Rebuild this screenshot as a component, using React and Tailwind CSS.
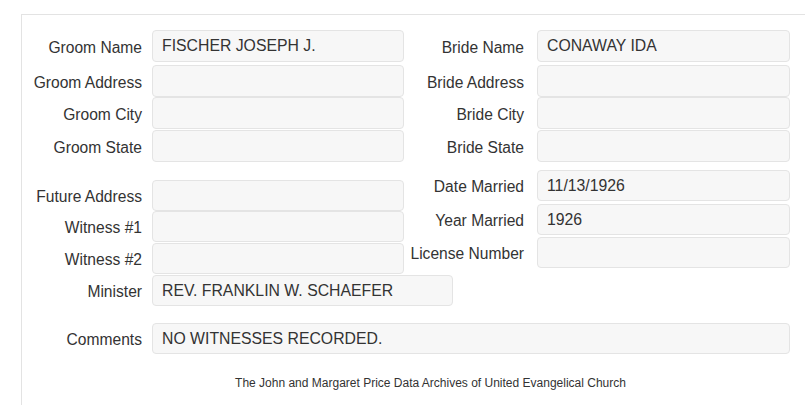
const Field = ({ label, value, labelW, gap, inputW, h, mt }) => (
  <div className={`flex items-center ${mt}`}>
    <label
      className={`${labelW} ${gap} shrink-0 text-right text-[15.6px] leading-[18px] pt-[3px] text-[#333] whitespace-nowrap`}
    >
      {label}
    </label>
    <div
      className={`${inputW} ${h} shrink-0 flex items-center px-[9px] bg-[#f7f7f7] border border-[#e4e4e4] rounded-[4px] text-[15.8px] text-[#333] whitespace-nowrap overflow-hidden`}
    >
      {value}
    </div>
  </div>
);

export default function App() {
  return (
    <div
      className="w-[805px] h-[405px] overflow-hidden bg-white pt-[14px] pl-[21px]"
      style={{ fontFamily: '"Liberation Sans", Arial, sans-serif' }}
    >
      <div className="border-t border-l border-[#e3e3e3] min-h-[400px]">
        <div className="flex">
          {/* Left column */}
          <div className="flex flex-col w-[382px]">
            <Field label="Groom Name" value="FISCHER JOSEPH J." labelW="w-[120px]" gap="mr-[10px]" inputW="w-[252px]" h="h-[32px]" mt="mt-[15px]" />
            <Field label="Groom Address" value="" labelW="w-[120px]" gap="mr-[10px]" inputW="w-[252px]" h="h-[32px]" mt="mt-[3px]" />
            <Field label="Groom City" value="" labelW="w-[120px]" gap="mr-[10px]" inputW="w-[252px]" h="h-[32px]" mt="mt-0" />
            <Field label="Groom State" value="" labelW="w-[120px]" gap="mr-[10px]" inputW="w-[252px]" h="h-[32px]" mt="mt-[1px]" />
            <Field label="Future Address" value="" labelW="w-[120px]" gap="mr-[10px]" inputW="w-[252px]" h="h-[31px]" mt="mt-[18px]" />
            <Field label="Witness #1" value="" labelW="w-[120px]" gap="mr-[10px]" inputW="w-[252px]" h="h-[31px]" mt="mt-0" />
            <Field label="Witness #2" value="" labelW="w-[120px]" gap="mr-[10px]" inputW="w-[252px]" h="h-[31px]" mt="mt-[1px]" />
            <Field label="Minister" value="REV. FRANKLIN W. SCHAEFER" labelW="w-[120px]" gap="mr-[10px]" inputW="w-[301px]" h="h-[31px]" mt="mt-[1px]" />
          </div>

          {/* Right column */}
          <div className="flex flex-col w-[386px]">
            <Field label="Bride Name" value="CONAWAY IDA" labelW="w-[120px]" gap="mr-[13px]" inputW="w-[253px]" h="h-[32px]" mt="mt-[15px]" />
            <Field label="Bride Address" value="" labelW="w-[120px]" gap="mr-[13px]" inputW="w-[253px]" h="h-[32px]" mt="mt-[3px]" />
            <Field label="Bride City" value="" labelW="w-[120px]" gap="mr-[13px]" inputW="w-[253px]" h="h-[32px]" mt="mt-0" />
            <Field label="Bride State" value="" labelW="w-[120px]" gap="mr-[13px]" inputW="w-[253px]" h="h-[32px]" mt="mt-[1px]" />
            <Field label="Date Married" value="11/13/1926" labelW="w-[120px]" gap="mr-[13px]" inputW="w-[253px]" h="h-[31px]" mt="mt-[8px]" />
            <Field label="Year Married" value="1926" labelW="w-[120px]" gap="mr-[13px]" inputW="w-[253px]" h="h-[31px]" mt="mt-[3px]" />
            <Field label="License Number" value="" labelW="w-[120px]" gap="mr-[13px]" inputW="w-[253px]" h="h-[31px]" mt="mt-[2px]" />
          </div>
        </div>

        {/* Comments */}
        <Field label="Comments" value="NO WITNESSES RECORDED." labelW="w-[120px]" gap="mr-[10px]" inputW="w-[638px]" h="h-[31px]" mt="mt-[17px]" />

        {/* Footer */}
        <div className="mt-[22px] pl-[34px] text-center text-[12px] leading-[14px] text-[#333]">
          The John and Margaret Price Data Archives of United Evangelical Church
        </div>
      </div>
    </div>
  );
}
